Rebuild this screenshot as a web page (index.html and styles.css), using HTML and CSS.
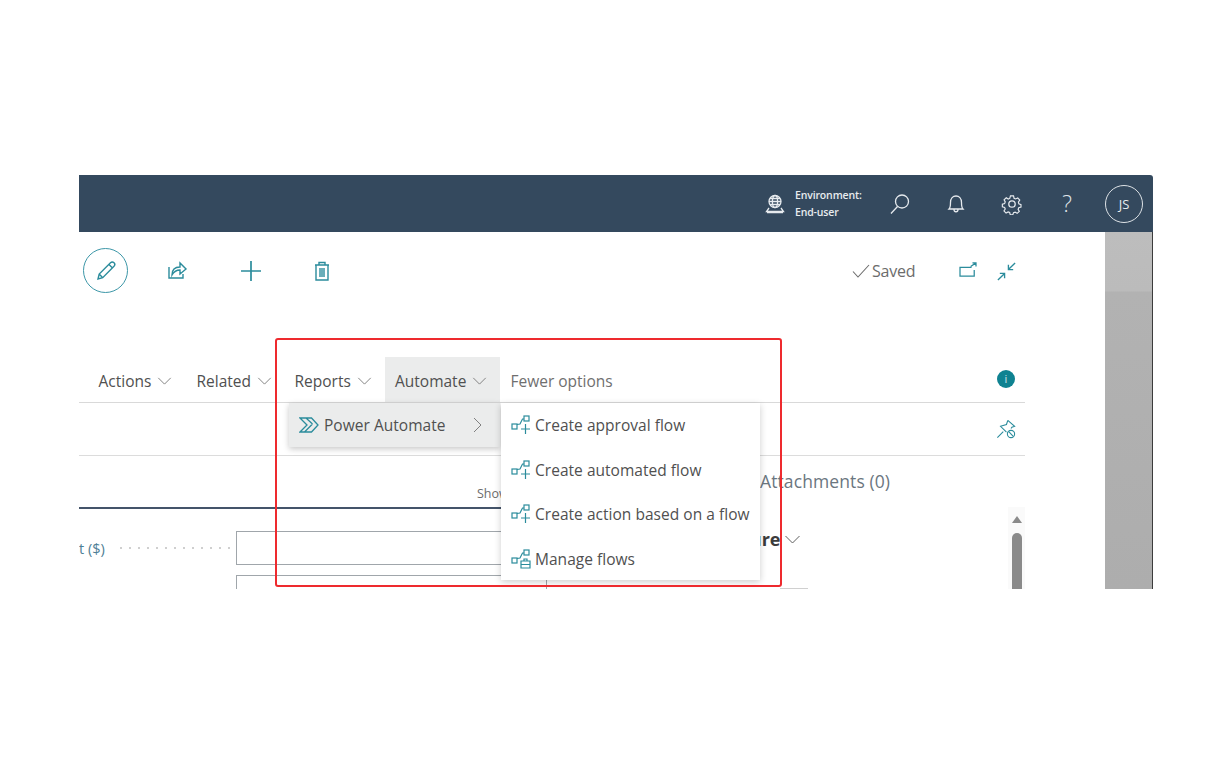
FILE: index.html
```html
<!DOCTYPE html>
<html lang="en">
<head>
<meta charset="utf-8">
<title>Automate menu</title>
<link rel="stylesheet" href="styles.css">
</head>
<body>
<div class="app">
  <header class="topbar">
    <svg class="ic env" viewBox="0 0 20 20"><circle cx="10" cy="7.500" r="6"/><ellipse cx="10" cy="7.500" rx="2.600" ry="6"/><path d="M4 7.500h12M5 4.500h10M5 10.500h10M4 14l-2.500 3.500h17L16 14M2 18.500h16"/></svg>
    <div class="env-text"><span>Environment:</span><span>End-user</span></div>
    <svg class="ic search" viewBox="0 0 22 22"><circle cx="13" cy="8.500" r="6.500"/><path d="M8.500 13.500 2 20.500"/></svg>
    <svg class="ic bell" viewBox="0 0 20 22"><path d="M3 16c1.500-1.500 1.500-3 1.500-6.500C4.500 5.500 7 3 10 3s5.500 2.500 5.500 6.500c0 3.500 0 5 1.500 6.500zM8 16.500c0 3 4 3 4 0"/></svg>
    <svg class="ic gear" viewBox="0 0 22 22"><circle cx="11" cy="11" r="3.200"/><path d="M9.300 2h3.400l.6 2.600 1.700.8 2.400-1.200 2.200 2.500-1.500 2.200.5 1.800 2.400 1v2.600l-2.500.9-.7 1.800 1.300 2.300-2.400 2.100-2.200-1.400-1.800.6-.8 2.400H9.100l-.7-2.500-1.700-.7-2.300 1.300-2.300-2.300 1.400-2.300-.7-1.700-2.500-.8v-2.800l2.500-.8.700-1.800-1.300-2.300 2.400-2.200 2.200 1.400 1.700-.7z" transform="translate(1.100 1.100) scale(.9)"/></svg>
    <span class="help">?</span>
    <div class="avatar">JS</div>
  </header>

  <div class="workspace">
    <main class="page">
      <div class="toolbar">
        <div class="edit-btn">
          <svg class="tl" viewBox="0 0 22 22"><path d="M3 19l1.200-5L15.500 2.800c1-1 2.500-1 3.500 0s1 2.500 0 3.500L7.700 17.700zM4.200 14l3.500 3.700M14 4.500l3.500 3.500"/></svg>
        </div>
        <svg class="tl share" viewBox="0 0 22 22"><path d="M3 8v11h14v-4M6 16c0-5 3-8 8-8V4l6 6-6 5v-4c-4 0-6 1.500-8 5z"/></svg>
        <svg class="tl plus" viewBox="0 0 22 22"><path d="M11 1v20M1 11h20"/></svg>
        <svg class="tl trash" viewBox="0 0 22 22"><path d="M4 5h14M8 5V2.500h6V5M5 5v15h12V5M9 8v9M11 8v9M13 8v9"/></svg>
        <div class="saved">
          <svg class="check" viewBox="0 0 18 14"><path d="M1 7.500 6 13 17 1"/></svg>
          <span>Saved</span>
        </div>
        <svg class="tl open" viewBox="0 0 22 18"><path d="M15 6H2v10h16V9M14 5l6-4M16 1h4v4"/></svg>
        <svg class="tl collapse" viewBox="0 0 22 22"><path d="M13 9l7-7M13 4v5h5M9 13l-7 7M4 13h5v5"/></svg>
      </div>

      <nav class="actionbar">
        <span class="act act-actions">Actions <svg class="chev" viewBox="0 0 16 9"><path d="M1 1l7 7 7-7"/></svg></span>
        <span class="act act-related">Related <svg class="chev" viewBox="0 0 16 9"><path d="M1 1l7 7 7-7"/></svg></span>
        <span class="act act-reports">Reports <svg class="chev" viewBox="0 0 16 9"><path d="M1 1l7 7 7-7"/></svg></span>
        <span class="act act-automate">Automate <svg class="chev" viewBox="0 0 16 9"><path d="M1 1l7 7 7-7"/></svg></span>
        <span class="act act-fewer">Fewer options</span>
        <span class="info">i</span>
      </nav>

      <div class="pinrow">
        <svg class="tl pin" viewBox="0 0 22 22"><path d="M1.500 20.500l6.500-6.500M13 1.500l7.500 6.500-3 1-1 1.500M13 1.500l-1.500 4.500-6.500 2 6.500 6.500"/><circle cx="16.500" cy="16.500" r="4"/><path d="M14 14l5 5"/></svg>
      </div>

      <div class="tabs">
        <span class="tab-show">Show more</span>
        <span class="tab-att">Attachments (0)</span>
      </div>

      <div class="content">
        <div class="form">
          <div class="field">
            <span class="field-label">t ($)</span>
            <span class="dots"></span>
            <span class="input"></span>
          </div>
          <div class="field">
            <span class="field-label"></span>
            <span class="dots none"></span>
            <span class="input"></span>
          </div>
        </div>
        <div class="factbox">
          <h2 class="fact-title">Picture <svg class="chev fact-chev" viewBox="0 0 16 9"><path d="M1 1l7 7 7-7"/></svg></h2>
          <div class="fact-rule"></div>
        </div>
        <div class="scroll">
          <span class="scroll-up"></span>
          <span class="scroll-thumb"></span>
        </div>
      </div>
    </main>
    <aside class="backdrop"></aside>
  </div>

  <div class="menu menu-parent">
    <svg class="pa" viewBox="0 0 20 16"><path d="M1 1h11.500l6.500 7-6.500 7H1l7-7zM5.500 15l8-8M7 1l6.500 6"/></svg>
    <span class="menu-label">Power Automate</span>
    <svg class="next" viewBox="0 0 9 16"><path d="M1 1l7 7-7 7"/></svg>
  </div>

  <ul class="menu menu-sub">
    <li><svg class="fl" viewBox="0 0 20 20"><rect x="1" y="9" width="5" height="5"/><rect x="13" y="1" width="5" height="5"/><path d="M6 9.500 9 9l2.500-5H13M14.500 9v10M10 14h9"/></svg>Create approval flow</li>
    <li><svg class="fl" viewBox="0 0 20 20"><rect x="1" y="9" width="5" height="5"/><rect x="13" y="1" width="5" height="5"/><path d="M6 9.500 9 9l2.500-5H13M14.500 9v10M10 14h9"/></svg>Create automated flow</li>
    <li><svg class="fl" viewBox="0 0 20 20"><rect x="1" y="9" width="5" height="5"/><rect x="13" y="1" width="5" height="5"/><path d="M6 9.500 9 9l2.500-5H13M14.500 9v10M10 14h9"/></svg>Create action based on a flow</li>
    <li><svg class="fl" viewBox="0 0 20 20"><rect x="1" y="9" width="5" height="5"/><rect x="13" y="1" width="5" height="5"/><path d="M6 9.500 9 9l2.500-5H13M10 12h9v7h-9zM13 12v-2h3v2M10 15.500h9"/></svg>Manage flows</li>
  </ul>

  <div class="callout"></div>
</div>
</body>
</html>
```
FILE: styles.css
```css
* { box-sizing: border-box; }
html, body { margin: 0; padding: 0; background: #fff; }
body { width: 1232px; height: 764px; overflow: hidden; font-family: "Open Sans", "Noto Sans", "Liberation Sans", sans-serif; color: #505050; }

.app { position: relative; width: 1074px; height: 414px; margin: 175px 0 0 79px; overflow: hidden; display: flex; flex-direction: column; }

svg { fill: none; display: block; flex: none; }

.topbar { height: 57px; flex: none; background: #34495e; display: flex; align-items: center; padding-right: 10px; border-radius: 0 3px 0 0; color: #e8ecef; }
.ic { stroke: #e6eaee; stroke-width: 1.300; }
.env { width: 20px; height: 20px; margin-left: auto; }
.env-text { display: flex; flex-direction: column; font-size: 10.500px; line-height: 17px; margin-left: 10px; width: 78px; font-weight: 600; letter-spacing: -.15px; }
.search { width: 22px; height: 22px; margin-left: 16px; }
.bell { width: 20px; height: 22px; margin-left: 35px; }
.gear { width: 22px; height: 22px; margin-left: 35px; }
.help { font-size: 23px; font-weight: 300; width: 20px; text-align: center; margin-left: 34px; line-height: 1; color: #dfe4e8; }
.avatar { width: 38px; height: 38px; margin-left: 28px; border: 1.500px solid #dde2e6; border-radius: 50%; display: flex; align-items: center; justify-content: center; font-size: 13px; font-weight: 500; }

.workspace { flex: 1; min-height: 0; display: flex; justify-content: space-between; }
.page { width: 946px; display: flex; flex-direction: column; }
.backdrop { width: 48px; background: linear-gradient(#bdbdbd 0, #bbbbbb 59px, #b2b2b2 60px, #adadad 100%); border-right: 1px solid #3c3c3c; }

.toolbar { height: 125px; flex: none; display: flex; align-items: flex-start; padding: 16px 0 0 4px; }
.tl { stroke: #2b8c9c; stroke-width: 1.400; width: 22px; height: 22px; }
.edit-btn { width: 45px; height: 45px; border: 1.500px solid #3d97a8; border-radius: 50%; display: flex; align-items: center; justify-content: center; }
.share { margin: 11px 0 0 38px; }
.plus { margin: 12px 0 0 52px; stroke-width: 1.700; }
.trash { margin: 12px 0 0 49px; }
.saved { display: flex; align-items: center; gap: 2px; margin: 12px 0 0 519px; font-size: 16px; line-height: 22px; color: #6c6c6c; width: 106px; letter-spacing: -.2px; }
.check { width: 18px; height: 14px; stroke: #6c6c6c; stroke-width: 1.100; }
.open { width: 20px; height: 16px; margin-top: 14px; }
.collapse { width: 21px; height: 21px; margin: 13px 0 0 18px; }

.actionbar { height: 46px; flex: none; display: flex; align-items: stretch; border-bottom: 1px solid #d9d9d9; font-size: 15.500px; color: #505050; position: relative; }
.act { display: flex; align-items: center; gap: 6px; padding-top: 2px; }
.chev { width: 15px; height: 8px; stroke: #757575; stroke-width: 1; }
.act-actions { margin-left: 19.500px; width: 98px; }
.act-related { width: 98px; }
.act-reports { width: 90px; }
.act-automate { width: 115px; padding-left: 10.500px; background: #ebecec; }
.act-fewer { margin-left: 11px; color: #6f6f6f; }
.info { position: absolute; right: 10px; top: 13px; width: 18px; height: 18px; border-radius: 50%; background: #0f8291; color: #cfe8ec; font-size: 11px; text-align: center; line-height: 18px; }

.pinrow { height: 53px; flex: none; display: flex; align-items: center; justify-content: flex-end; padding: 0 9px 0 0; border-bottom: 1px solid #dcdcdc; }
.pin { width: 20px; height: 20px; stroke-width: 1.200; }

.tabs { height: 51px; flex: none; position: relative; }
.tab-show { position: absolute; left: 398px; top: 29px; font-size: 12.500px; color: #6c6c6c; white-space: nowrap; }
.tab-att { position: absolute; left: 681px; top: 13px; font-size: 17.500px; line-height: 24px; color: #6b7680; letter-spacing: .1px; white-space: nowrap; }

.content { flex: 1; min-height: 0; display: flex; position: relative; }
.form { width: 468px; border-top: 2px solid #44546a; padding-top: 22px; display: flex; flex-direction: column; gap: 10px; }
.field { display: flex; align-items: center; height: 34px; flex: none; }
.field-label { width: 41px; font-size: 14.500px; color: #4f7f96; white-space: nowrap; }
.dots { width: 110px; margin-right: 6px; height: 2px; background: repeating-linear-gradient(90deg, #cfcfcf 0 2px, transparent 2px 9px); }
.dots.none { background: none; }
.input { flex: 1; height: 34px; border: 1px solid #a0a6ab; }
.factbox { flex: 1; padding-top: 20px; }
.fact-title { display: flex; align-items: center; gap: 3px; margin: 0 0 0 169px; font-size: 18px; line-height: 24px; font-weight: 700; color: #3c3c3c; white-space: nowrap; }
.fact-chev { width: 17px; height: 9px; stroke: #606060; }
.fact-rule { width: 28px; height: 1px; margin: 37px 0 0 233px; background: #d0d0d0; }
.scroll { width: 17px; flex: none; background: #fafafa; display: flex; flex-direction: column; align-items: center; }
.scroll-up { width: 0; height: 0; margin-top: 9px; border: 5.500px solid transparent; border-top: 0; border-bottom: 7px solid #8a8a8a; }
.scroll-thumb { width: 10px; flex: 1; margin-top: 10px; margin-bottom: -20px; background: #8a8a8a; border-radius: 5px 5px 0 0; }

.menu { position: absolute; margin: 0; padding: 0; list-style: none; font-size: 15.500px; color: #505050; letter-spacing: .03px; }
.menu-parent { left: 210px; top: 228px; width: 211px; height: 44px; background: #ebecec; box-shadow: 0 2px 6px rgba(0,0,0,.22); display: flex; align-items: center; padding-left: 10px; }
.pa { width: 20px; height: 16px; stroke: #2b8c9c; stroke-width: 1.300; }
.menu-label { margin-left: 5px; }
.next { width: 9px; height: 16px; margin-left: 27px; stroke: #808080; stroke-width: 1; }
.menu-sub { left: 422px; top: 228px; width: 259px; height: 177px; background: #fff; box-shadow: 0 2px 7px rgba(0,0,0,.2); }
.menu-sub li { height: 44.500px; display: flex; align-items: center; padding: 0 0 0 10px; gap: 4px; white-space: nowrap; }
.fl { width: 20px; height: 20px; stroke: #2b8c9c; stroke-width: 1.200; }

.callout { position: absolute; left: 196px; top: 163px; width: 507px; height: 249px; border: 2px solid #ee2a2e; border-radius: 3px; }
```
